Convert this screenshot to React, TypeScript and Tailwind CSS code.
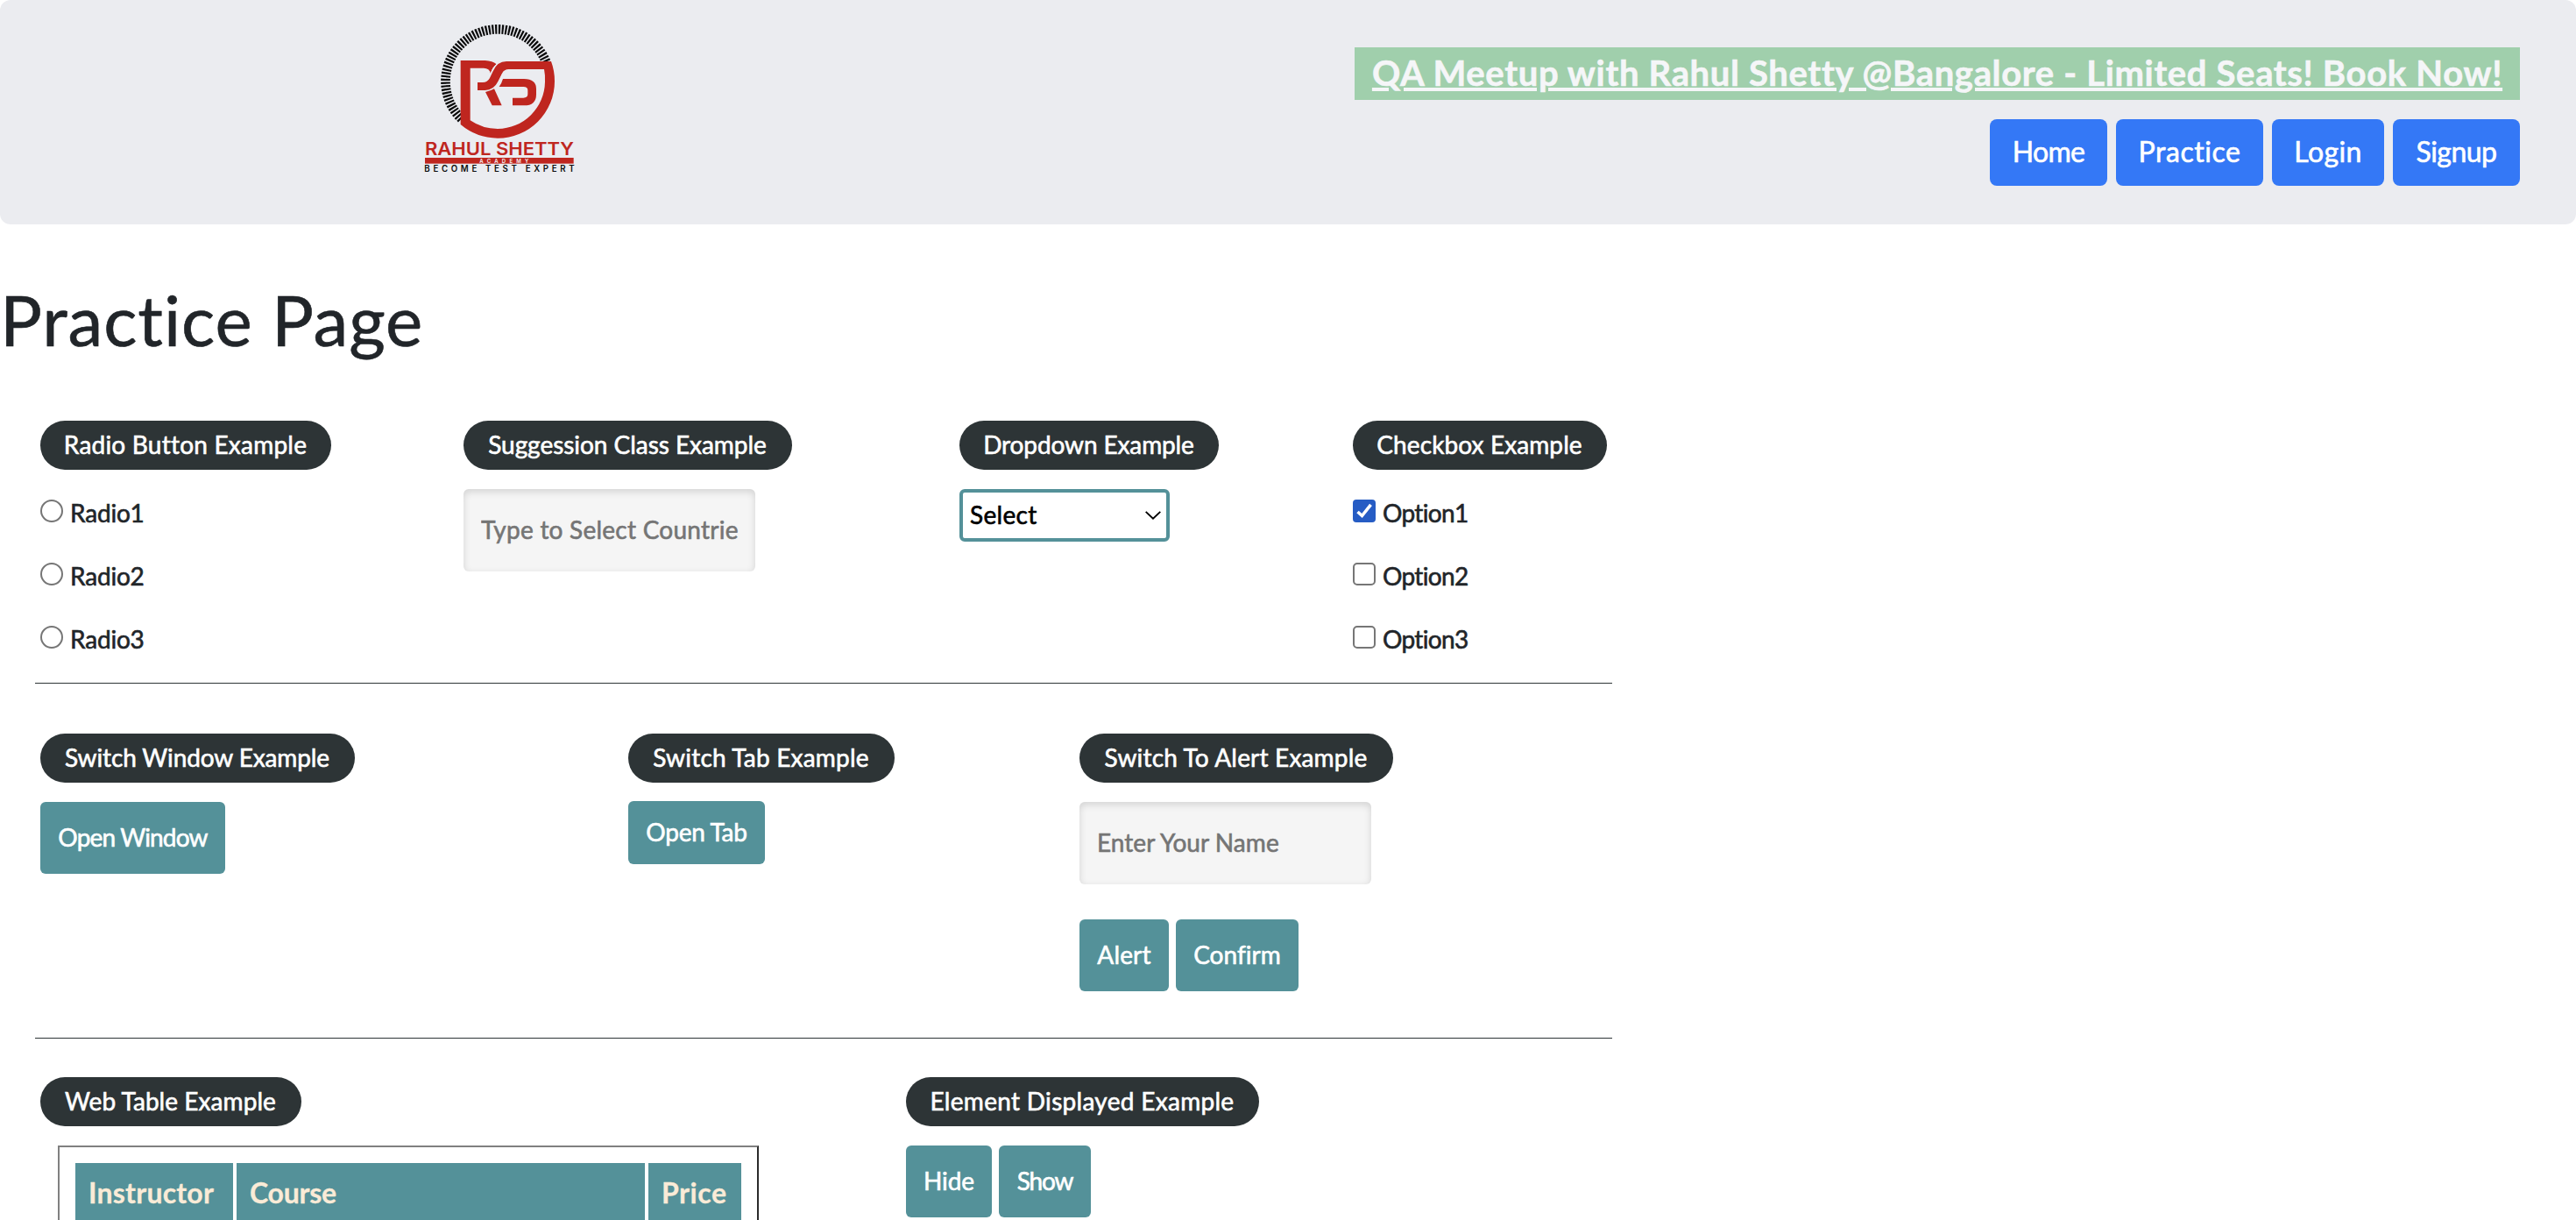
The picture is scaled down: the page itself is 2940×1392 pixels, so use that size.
import React from "react";

function Logo() {
  return (
    <svg width="220" height="200" viewBox="0 0 660 600" className="block shrink-0" aria-label="Rahul Shetty Academy">
      <path
        d="M200 377 A178.500 178.500 0 1 1 490 183"
        fill="none"
        stroke="#0b0b0c"
        strokeWidth="32"
        strokeDasharray="6.600 4.600"
      />
      <path
        fill="#bf261f"
        d="M197 177 H281 Q306 178 320 190 Q305 202 300 221 Q296 203 276 203 H230 V382 Q272 411 324 411 A163 163 0 0 0 486 250 Q487 226 483 207 H362 Q346 207 339 221 L325 249 Q311 278 281 279 H255 V252 H273 Q289 252 297 237 L308 214 Q322 180 354 180 H507 Q519 212 519 248 A195 195 0 0 1 324 443 Q251 442 197 396 Z"
      />
      <path fill="none" stroke="#ebecf0" strokeWidth="3" d="M325 187 Q309 196 302 218 L293 238 M341 222 L328 250 Q314 278 290 281" />
      <path fill="#bf261f" d="M282 285 Q300 281 312 274 L338 331 H305 Z" />
      <path fill="#bf261f" d="M342 240 H414 Q456 240 456 275 V293 Q456 331 414 331 H375 V305 H412 Q427 305 427 292 V279 Q427 267 412 267 H329 Q337 257 342 240 Z" />
      <text x="75" y="502" fill="#bf261f" fontFamily="Inter, sans-serif" fontWeight="600" fontSize="62" textLength="510" lengthAdjust="spacingAndGlyphs">
        RAHUL SHETTY
      </text>
      <rect x="75" y="510" width="509" height="20" fill="#bf261f" />
      <text x="262" y="527" fill="#f4f4f6" fontFamily="Inter, sans-serif" fontWeight="600" fontSize="18" textLength="168">
        ACADEMY
      </text>
      <text x="73" y="558" fill="#0b0b0c" fontFamily="Inter, sans-serif" fontWeight="600" fontSize="29" textLength="514">
        BECOME TEST EXPERT
      </text>
    </svg>
  );
}

function Pill({ className, children }: { className: string; children: React.ReactNode }) {
  return (
    <h2 className={`h-14 rounded-full bg-[#2d3436] pr-px text-center leading-[54px] whitespace-nowrap text-white ${className}`}>
      {children}
    </h2>
  );
}

function Btn({ className, children }: { className: string; children: React.ReactNode }) {
  return (
    <button className={`flex items-center justify-center rounded-md bg-[#549199] pb-[2px] whitespace-nowrap text-white ${className}`}>
      {children}
    </button>
  );
}

function NavLink({ className, children }: { className: string; children: React.ReactNode }) {
  return (
    <a className={`h-[76px] rounded-lg bg-[#3478f6] text-center text-[32px] leading-[74px] text-white ${className}`}>
      {children}
    </a>
  );
}

function Choice({ label, tracking, round, checked }: { label: string; tracking: string; round?: boolean; checked?: boolean }) {
  return (
    <label className="flex h-[72px] items-start">
      {checked ? (
        <span className="mt-[21px] size-[26px] rounded-[4px] bg-[#265cc4]">
          <svg viewBox="0 0 26 26" className="size-[26px]">
            <path d="M5.500 14 L10.500 18.500 L20.500 5.800" fill="none" stroke="white" strokeWidth="3.600" />
          </svg>
        </span>
      ) : (
        <span className={`mt-[21px] size-[26px] border-2 border-[#767676] bg-white ${round ? "rounded-full" : "rounded-[5px]"}`} />
      )}
      <span className={`ml-2 leading-[72px] ${tracking}`}>{label}</span>
    </label>
  );
}

const inputClass =
  "block h-[94px] w-[333px] rounded-md bg-[#f5f5f5] pb-[2px] pl-5 placeholder:text-[#757575] placeholder:opacity-100 shadow-[inset_0_3px_8px_rgba(0,0,0,0.14)] outline-none";

export default function App() {
  return (
    <div className="h-[1392px] w-[2940px] overflow-hidden bg-white font-['Lato',sans-serif] text-[28px] text-[#212529] [-webkit-text-stroke:0.6px_currentColor]">
      <header className="flex h-64 justify-between rounded-xl bg-[#ebecf0] pr-16 pl-[460px]">
        <div className="pt-[10px] [-webkit-text-stroke:0]">
          <Logo />
        </div>
        <div className="flex flex-col items-end gap-[22px] pt-[54px]">
          <a className="h-[60px] w-[1330px] bg-[#a0cfac] text-center text-[40px] leading-[58px] font-bold tracking-[0.66px] whitespace-nowrap text-[#f5f6f8] underline decoration-4 underline-offset-[2px]">
            QA Meetup with Rahul Shetty @Bangalore - Limited Seats! Book Now!
          </a>
          <nav className="flex gap-[10px]">
            <NavLink className="w-[134px] tracking-[-0.72px]">Home</NavLink>
            <NavLink className="w-[168px] tracking-[0.53px]">Practice</NavLink>
            <NavLink className="w-[128px] tracking-[0.37px]">Login</NavLink>
            <NavLink className="w-[145px] tracking-[-0.51px]">Signup</NavLink>
          </nav>
        </div>
      </header>

      <h1 className="mt-[60px] h-24 text-[80px] leading-[96px] tracking-[0.9px]">Practice Page</h1>

      <main className="mt-[68px] ml-10 w-[1800px]">
        <section className="flex h-[300px] border-b border-[#2d3436] pl-[6px]">
          <div className="w-[483px]">
            <Pill className="w-[332px] tracking-[0.22px]">Radio Button Example</Pill>
            <div className="mt-[13px]">
              <Choice round label="Radio1" tracking="tracking-[-0.18px]" />
              <Choice round label="Radio2" tracking="tracking-[-0.18px]" />
              <Choice round label="Radio3" tracking="tracking-[-0.18px]" />
            </div>
          </div>
          <div className="w-[566px]">
            <Pill className="w-[375px] tracking-[-0.04px]">Suggession Class Example</Pill>
            <input className={`mt-[22px] tracking-[0.24px] ${inputClass}`} placeholder="Type to Select Countrie" />
          </div>
          <div className="w-[449px]">
            <Pill className="w-[296px] tracking-[-0.12px]">Dropdown Example</Pill>
            <button className="mt-[22px] flex h-[60px] w-[240px] items-center justify-between rounded-md border-4 border-[#549199] bg-white pr-[6px] pl-2 text-black">
              <span className="pb-[2px] tracking-[0.32px]">Select</span>
              <svg viewBox="0 0 18 10" className="h-[10px] w-[18px]" fill="none" stroke="black" strokeWidth="1.900">
                <path d="M0.700 0.900 L9 8.600 L17.300 0.900" />
              </svg>
            </button>
          </div>
          <div>
            <Pill className="w-[290px] tracking-[0.1px]">Checkbox Example</Pill>
            <div className="mt-[13px]">
              <Choice checked label="Option1" tracking="tracking-[-0.64px]" />
              <Choice label="Option2" tracking="tracking-[-0.64px]" />
              <Choice label="Option3" tracking="tracking-[-0.64px]" />
            </div>
          </div>
        </section>

        <section className="flex h-[405px] border-b border-[#2d3436] pt-[57px] pl-[6px]">
          <div className="w-[671px]">
            <Pill className="w-[359px] tracking-[-0.12px]">Switch Window Example</Pill>
            <Btn className="mt-[22px] h-[82px] w-[211px] tracking-[-0.85px]">Open Window</Btn>
          </div>
          <div className="w-[515px]">
            <Pill className="w-[304px] tracking-[0.2px]">Switch Tab Example</Pill>
            <Btn className="mt-[21px] h-[72px] w-[156px] tracking-[-0.28px]">Open Tab</Btn>
          </div>
          <div>
            <Pill className="w-[358px] tracking-[0.18px]">Switch To Alert Example</Pill>
            <input className={`mt-[22px] tracking-[0.05px] ${inputClass}`} placeholder="Enter Your Name" />
            <div className="mt-10 flex gap-2">
              <Btn className="h-[82px] w-[102px] tracking-[0.17px]">Alert</Btn>
              <Btn className="h-[82px] w-[140px] tracking-[0.04px]">Confirm</Btn>
            </div>
          </div>
        </section>

        <section className="flex pt-11 pl-[6px]">
          <div className="w-[988px]">
            <Pill className="w-[298px] tracking-[0.06px]">Web Table Example</Pill>
            <div className="mt-[22px] ml-5 h-[400px] w-[800px] border-2 border-t-[#808080] border-r-[#2b2b2b] border-b-[#2b2b2b] border-l-[#808080] p-[18px]">
              <div className="grid grid-cols-[180px_466px_106px] gap-1 text-[32px] leading-[68px] font-bold text-[#faebd7] [-webkit-text-stroke:0.3px_currentColor]">
                <div className="h-[76px] bg-[#549199] pl-[15px] tracking-[0.24px]">Instructor</div>
                <div className="h-[76px] bg-[#549199] pl-[15px] tracking-[-0.24px]">Course</div>
                <div className="h-[76px] bg-[#549199] pl-[15px] tracking-[0.56px]">Price</div>
              </div>
            </div>
          </div>
          <div>
            <Pill className="w-[403px] tracking-[0.3px]">Element Displayed Example</Pill>
            <div className="mt-[22px] flex gap-2">
              <Btn className="h-[82px] w-[98px] tracking-[-0.09px]">Hide</Btn>
              <Btn className="h-[82px] w-[105px] tracking-[-1.13px]">Show</Btn>
            </div>
          </div>
        </section>
      </main>
    </div>
  );
}
